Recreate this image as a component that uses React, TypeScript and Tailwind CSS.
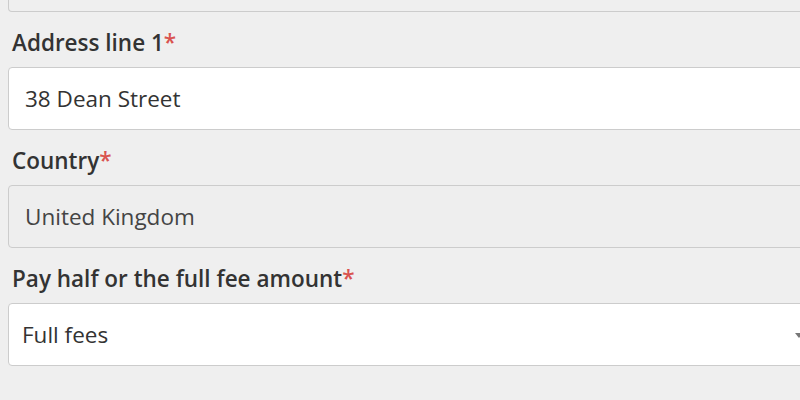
import React from "react";

const font = { fontFamily: '"Open Sans", "Noto Sans", sans-serif' };

function Label({ text }: { text: string }) {
  return (
    <div className="mt-[16px] mb-[9px] h-[30px] pl-[4px] text-[22.5px] leading-[30px] font-[560] text-[#333]">
      {text}
      <span className="text-[#d9534f]">*</span>
    </div>
  );
}

export default function App() {
  return (
    <div className="w-[800px] h-[400px] overflow-hidden bg-[#efefef]" style={font}>
      <div className="pl-[8px] w-[840px]">
        <div className="h-[12px] border border-t-0 border-[#cccccc] rounded-b-[4px] bg-[#efefef]" />
        <Label text="Address line 1" />
        <div className="h-[63px] border border-[#cccccc] rounded-[4px] bg-white pl-[16px] flex items-center text-[22.5px] text-[#333]">
          38 Dean Street
        </div>
        <Label text="Country" />
        <div className="h-[63px] border border-[#cccccc] rounded-[4px] bg-[#eeeeee] pl-[16px] flex items-center text-[22.5px] text-[#444]">
          United Kingdom
        </div>
        <Label text="Pay half or the full fee amount" />
        <div className="relative h-[63px] border border-[#cccccc] rounded-[4px] bg-white pl-[13px] flex items-center text-[22.5px] text-[#333]">
          Full fees
          <div className="absolute left-[786px] top-[29px] w-0 h-0 border-l-[4px] border-r-[4px] border-t-[5px] border-l-transparent border-r-transparent border-t-[#777]" />
        </div>
      </div>
    </div>
  );
}
